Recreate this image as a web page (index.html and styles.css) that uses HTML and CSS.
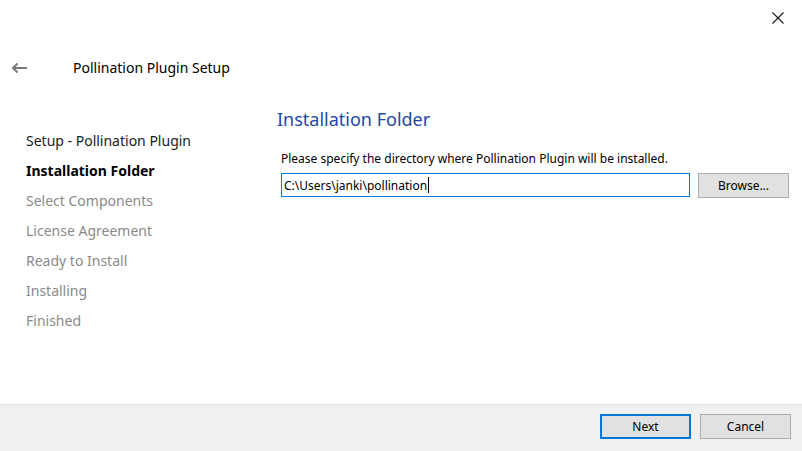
FILE: index.html
```html
<!DOCTYPE html>
<html>
<head>
<meta charset="utf-8">
<link rel="stylesheet" href="styles.css">
</head>
<body>
<div class="window">
  <div class="titlebar">
    <button class="close" aria-label="Close">
      <svg width="12" height="12" viewBox="0 0 12 12"><path d="M0.5 0.5 L11.5 11.5 M11.5 0.5 L0.5 11.5" stroke="#1a1a1a" stroke-width="1.1" fill="none"/></svg>
    </button>
  </div>
  <div class="header">
    <svg class="back" width="17" height="12" viewBox="0 0 17 12"><path d="M16 6 H2 M6.5 1.5 L2 6 L6.5 10.5" stroke="#7a7a7a" stroke-width="2" fill="none"/></svg>
    <span class="title">Pollination Plugin Setup</span>
  </div>
  <div class="main">
    <ul class="steps">
      <li class="done">Setup - Pollination Plugin</li>
      <li class="current">Installation Folder</li>
      <li>Select Components</li>
      <li>License Agreement</li>
      <li>Ready to Install</li>
      <li>Installing</li>
      <li>Finished</li>
    </ul>
    <div class="content">
      <h1 class="heading">Installation Folder</h1>
      <p class="desc">Please specify the directory where Pollination Plugin will be installed.</p>
      <div class="pathrow">
        <div class="input"><span>C:\Users\janki\pollination</span><span class="caret"></span></div>
        <button class="btn">Browse...</button>
      </div>
    </div>
  </div>
  <div class="footer">
    <button class="btn primary">Next</button>
    <button class="btn">Cancel</button>
  </div>
</div>
</body>
</html>
```
FILE: styles.css
```css
* { box-sizing: border-box; }
html, body { margin: 0; padding: 0; background: #fff; }
body { font-family: "Noto Sans", "Open Sans", sans-serif; color: #000; }
.window { width: 802px; height: 451px; display: flex; flex-direction: column; overflow: hidden; }
.titlebar { height: 36px; display: flex; justify-content: flex-end; }
.close { width: 46px; height: 36px; border: 0; background: transparent; padding: 0; display: flex; align-items: center; justify-content: center; margin-right: 1px; }
.header { height: 62px; display: flex; align-items: center; padding-left: 11px; padding-top: 1px; }
.back { display: block; }
.title { margin-left: 45px; font-size: 14px; color: #000; }
.main { flex: 1; display: flex; }
.steps { list-style: none; margin: 0; padding: 28px 0 0 26px; width: 277px; }
.steps li { height: 30px; line-height: 30px; font-size: 14px; color: #8a8a8a; white-space: nowrap; }
.steps li.done { color: #1a1a1a; }
.steps li.current { color: #000; font-weight: bold; }
.content { flex: 1; padding-top: 8px; padding-right: 12px; }
.heading { margin: 0; font-size: 18px; font-weight: normal; color: #1f48a4; line-height: 26px; }
.desc { margin: 18px 0 0 4px; font-size: 12px; line-height: 18px; }
.pathrow { display: flex; margin-top: 5px; margin-left: 4px; gap: 8px; }
.input { width: 409px; height: 24px; border: 1px solid #0078d7; display: flex; align-items: center; padding-left: 2px; font-size: 12px; }
.caret { display: inline-block; width: 1px; height: 16px; background: #000; margin-left: 1px; }
.btn { width: 91px; height: 25px; border: 1px solid #adadad; background: #e1e1e1; font-family: inherit; font-size: 12px; color: #000; padding: 0; }
.btn.primary { border: 2px solid #0078d7; }
.footer { height: 47px; border-top: 1px solid #dfdfdf; background: #f0f0f0; display: flex; justify-content: flex-end; align-items: flex-start; padding-top: 9px; padding-right: 11px; gap: 9px; }
```
